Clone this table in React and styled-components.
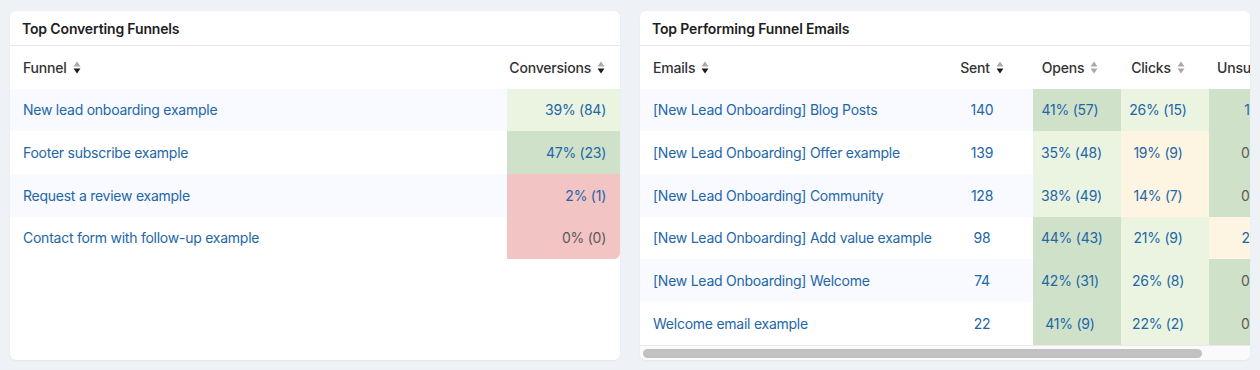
import React from "react";
import styled, { createGlobalStyle } from "styled-components";

// Heat colours used by the percentage cells
const heat = {
  dark: "#cfe2c9",
  light: "#eaf4e0",
  warn: "#fdf5e1",
  bad: "#f2c4c4",
};

const funnels = [
  { name: "New lead onboarding example", value: "39% (84)", bg: heat.light },
  { name: "Footer subscribe example", value: "47% (23)", bg: heat.dark },
  { name: "Request a review example", value: "2% (1)", bg: heat.bad },
  { name: "Contact form with follow-up example", value: "0% (0)", bg: heat.bad, muted: true },
];

const emails = [
  {
    name: "[New Lead Onboarding] Blog Posts",
    sent: 140,
    opens: ["41% (57)", heat.dark],
    clicks: ["26% (15)", heat.light],
    unsubs: ["1% (2)", heat.dark],
  },
  {
    name: "[New Lead Onboarding] Offer example",
    sent: 139,
    opens: ["35% (48)", heat.light],
    clicks: ["19% (9)", heat.warn],
    unsubs: ["0% (0)", heat.dark, true],
  },
  {
    name: "[New Lead Onboarding] Community",
    sent: 128,
    opens: ["38% (49)", heat.light],
    clicks: ["14% (7)", heat.warn],
    unsubs: ["0% (0)", heat.dark, true],
  },
  {
    name: "[New Lead Onboarding] Add value example",
    sent: 98,
    opens: ["44% (43)", heat.dark],
    clicks: ["21% (9)", heat.light],
    unsubs: ["2% (2)", heat.warn],
  },
  {
    name: "[New Lead Onboarding] Welcome",
    sent: 74,
    opens: ["42% (31)", heat.dark],
    clicks: ["26% (8)", heat.light],
    unsubs: ["0% (0)", heat.dark, true],
  },
  {
    name: "Welcome email example",
    sent: 22,
    opens: ["41% (9)", heat.dark],
    clicks: ["22% (2)", heat.light],
    unsubs: ["0% (0)", heat.dark, true],
  },
];

// visible part of the emails table vs its full width
const TABLE_WIDTH = 661;
const VIEW_WIDTH = 612;

const SortIcon = ({ active }) => (
  <SortSvg width="8" height="15" viewBox="0 0 8 15">
    <polygon points="0.5,6.5 4,1.5 7.5,6.5" fill="#a9a9a9" />
    <polygon points="0.5,8.5 4,13.5 7.5,8.5" fill={active ? "#1d1d1d" : "#a9a9a9"} />
  </SortSvg>
);

const HeadLabel = ({ children, active }) => (
  <HeadInner>
    {children}
    <SortIcon active={active} />
  </HeadInner>
);

export default function App() {
  return (
    <>
      <GlobalStyle />
      <Page>
        <Card>
          <CardTitle>Top Converting Funnels</CardTitle>
          <Table>
            <colgroup>
              <col />
              <col style={{ width: 113 }} />
            </colgroup>
            <thead>
              <tr>
                <Th>
                  <HeadLabel active>Funnel</HeadLabel>
                </Th>
                <Th $align="right" $pad="0 15px 0 0">
                  <HeadLabel active>Conversions</HeadLabel>
                </Th>
              </tr>
            </thead>
            <tbody>
              {funnels.map((f, i) => (
                <Row key={f.name} $striped={i % 2 === 0}>
                  <Td>{f.name}</Td>
                  <Td
                    $align="right"
                    $pad="0 14px 0 0"
                    $bg={f.bg}
                    $muted={f.muted}
                    $roundEnd={i === funnels.length - 1}
                  >
                    {f.value}
                  </Td>
                </Row>
              ))}
            </tbody>
          </Table>
        </Card>

        <Card>
          <CardTitle>Top Performing Funnel Emails</CardTitle>
          <Scroller>
            <Table $width={`${TABLE_WIDTH}px`}>
              <colgroup>
                <col style={{ width: 300 }} />
                <col style={{ width: 93 }} />
                <col style={{ width: 88 }} />
                <col style={{ width: 88 }} />
                <col style={{ width: 92 }} />
              </colgroup>
              <thead>
                <tr>
                  <Th>
                    <HeadLabel active>Emails</HeadLabel>
                  </Th>
                  <Th $align="center" $pad="0 17px 0 8px">
                    <HeadLabel active>Sent</HeadLabel>
                  </Th>
                  <Th $align="center" $pad="0 22px 0 8px">
                    <HeadLabel>Opens</HeadLabel>
                  </Th>
                  <Th $align="center" $pad="0 22px 0 8px">
                    <HeadLabel>Clicks</HeadLabel>
                  </Th>
                  <Th $pad="0 0 0 8px">
                    <HeadLabel>Unsubscribes</HeadLabel>
                  </Th>
                </tr>
              </thead>
              <tbody>
                {emails.map((e, i) => (
                  <Row key={e.name} $striped={i % 2 === 0}>
                    <Td>{e.name}</Td>
                    <Td $align="center" $pad="0 17px 0 8px">
                      {e.sent}
                    </Td>
                    <Td $align="center" $pad="0 22px 0 8px" $bg={e.opens[1]}>
                      {e.opens[0]}
                    </Td>
                    <Td $align="center" $pad="0 22px 0 8px" $bg={e.clicks[1]}>
                      {e.clicks[0]}
                    </Td>
                    <Td $align="right" $pad="0 16px 0 0" $bg={e.unsubs[1]} $muted={e.unsubs[2]}>
                      {e.unsubs[0]}
                    </Td>
                  </Row>
                ))}
              </tbody>
            </Table>
          </Scroller>
          <ScrollTrack>
            <ScrollThumb style={{ width: `${(VIEW_WIDTH / TABLE_WIDTH) * 100}%` }} />
          </ScrollTrack>
        </Card>
      </Page>
    </>
  );
}

// Styles
const GlobalStyle = createGlobalStyle`
  html, body {
    margin: 0;
    padding: 0;
    background: #eef1f5;
    font-family: Inter, "Liberation Sans", Arial, sans-serif;
  }
`;

const Page = styled.div`
  display: grid;
  grid-template-columns: 610px 610px;
  gap: 20px;
  padding: 11px 10px;
  align-items: stretch;
`;

const Card = styled.div`
  min-width: 0;
  background: #ffffff;
  border-radius: 6px;
  box-shadow: 0 1px 2px rgba(30, 40, 60, 0.05);
  overflow: hidden;
  display: flex;
  flex-direction: column;
`;

const CardTitle = styled.div`
  height: 34px;
  display: flex;
  align-items: center;
  padding: 0 12px;
  border-bottom: 1px solid #e4e6ea;
  font-size: 14px;
  font-weight: 600;
  letter-spacing: -0.15px;
  color: #1e1e1e;
`;

const Scroller = styled.div`
  overflow: hidden;
`;

const ScrollTrack = styled.div`
  height: 9px;
  padding: 3px 3px 2px;
  background: #fafafa;
  border-top: 1px solid #e9e9e9;
`;

const ScrollThumb = styled.div`
  height: 100%;
  background: #c1c1c1;
  border-radius: 5px;
`;

const Table = styled.table`
  width: ${(p) => p.$width || "100%"};
  border-collapse: collapse;
  table-layout: fixed;
  font-size: 14px;
  letter-spacing: -0.25px;
`;

const Th = styled.th`
  height: 42.67px;
  padding: ${(p) => p.$pad || "0 13px"};
  text-align: ${(p) => p.$align || "left"};
  font-size: 14px;
  font-weight: 500;
  letter-spacing: -0.2px;
  color: #333;
  white-space: nowrap;
  overflow: hidden;
`;

const HeadInner = styled.span`
  display: inline-flex;
  align-items: center;
  gap: 6px;
`;

const SortSvg = styled.svg`
  flex: none;
  margin-top: 1px;
`;

const Row = styled.tr`
  background: ${(p) => (p.$striped ? "#f8faff" : "#ffffff")};
`;

const Td = styled.td`
  height: 42.67px;
  padding: ${(p) => p.$pad || "0 13px"};
  text-align: ${(p) => p.$align || "left"};
  background: ${(p) => p.$bg || "transparent"};
  color: ${(p) => (p.$muted ? "#5b5b5b" : "#2366a8")};
  white-space: nowrap;
  overflow: hidden;
  border-bottom-right-radius: ${(p) => (p.$roundEnd ? "6px" : "0")};
`;
